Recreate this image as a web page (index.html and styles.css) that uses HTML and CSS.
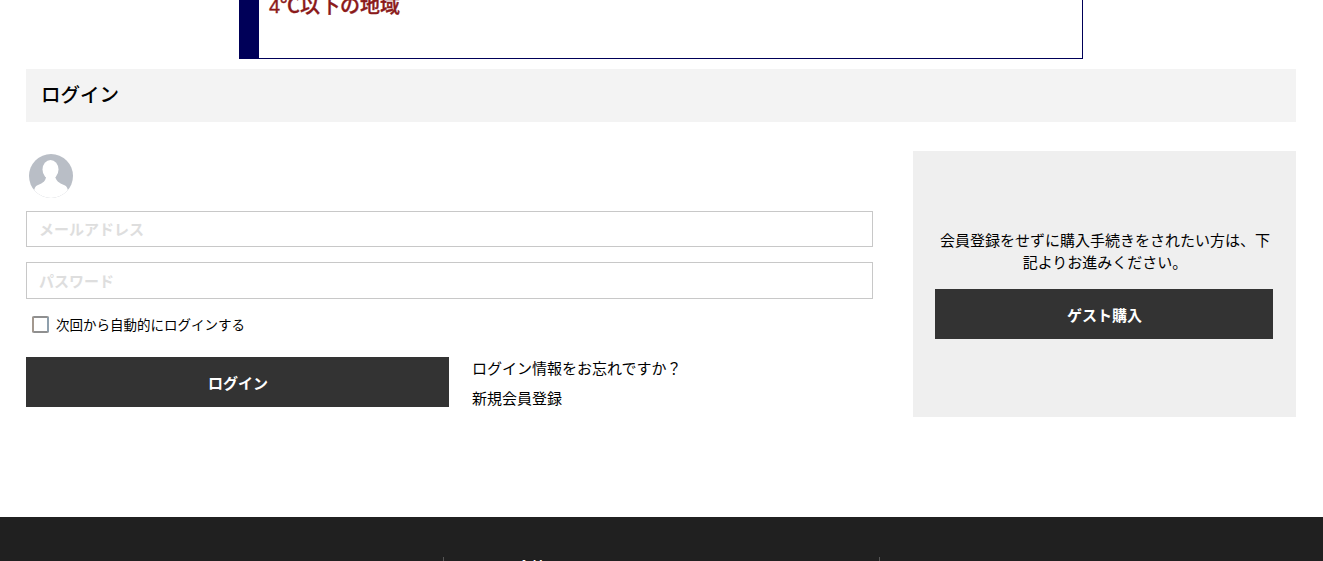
FILE: index.html
```html
<!DOCTYPE html>
<html lang="ja">
<head>
<meta charset="utf-8">
<title>ログイン</title>
<link rel="stylesheet" href="styles.css">
</head>
<body>
<div class="page">
  <div class="notice">
    <div class="notice-body"><p class="notice-title">4℃以下の地域</p></div>
  </div>
  <h1 class="heading">ログイン</h1>
  <main class="main">
    <form class="login">
      <svg class="avatar" viewBox="0 0 44 44" width="44" height="44" aria-hidden="true">
        <defs><clipPath id="c"><circle cx="22" cy="22" r="22"/></clipPath></defs>
        <circle cx="22" cy="22" r="22" fill="#b9bec6"/>
        <g clip-path="url(#c)" fill="#fff">
          <ellipse cx="21.5" cy="15.5" rx="8" ry="9.5"/>
          <path d="M17 22 C17 27 14 29 9 31 C6 32 5 35 5 38 L5 44 L39 44 L39 38 C39 35 38 32 35 31 C30 29 27 27 26 22 Z"/>
        </g>
      </svg>
      <input class="field field-first" type="text" placeholder="メールアドレス">
      <input class="field field-second" type="password" placeholder="パスワード">
      <label class="remember"><span class="check"></span><span class="remember-text">次回から自動的にログインする</span></label>
      <div class="actions">
        <button class="btn btn-login" type="button">ログイン</button>
        <div class="links">
          <a href="#">ログイン情報をお忘れですか？</a>
          <a href="#">新規会員登録</a>
        </div>
      </div>
    </form>
    <aside class="guest">
      <p class="guest-text">会員登録をせずに購入手続きをされたい方は、下記よりお進みください。</p>
      <button class="btn btn-guest" type="button">ゲスト購入</button>
    </aside>
  </main>
  <footer class="footer">
    <div class="foot-col foot-a"></div>
    <div class="foot-col foot-b"><span class="foot-title">会社</span></div>
    <div class="foot-col foot-c"></div>
  </footer>
</div>
</body>
</html>
```
FILE: styles.css
```css
* { box-sizing: border-box; }
html, body { margin: 0; padding: 0; background: #fff; }
body {
  font-family: "Liberation Sans", "Noto Sans CJK JP", sans-serif;
  color: #000;
  overflow: hidden;
}
.page { height: 561px; overflow: hidden; display: flex; flex-direction: column; }

.notice {
  width: 844px;
  height: 59px;
  margin-left: 239px;
  flex: none;
  border: 1px solid #000058;
  border-top: 0;
  border-left: 20px solid #000058;
  overflow: hidden;
}
.notice-body { padding-left: 10px; }
.notice-title {
  margin: -8px 0 0;
  font-size: 20px;
  line-height: 28px;
  font-weight: 500;
  -webkit-text-stroke: 0.35px #8b1a1a;
  color: #8b1a1a;
}

.heading {
  flex: none;
  height: 53px;
  margin: 10px 27px 0 26px;
  padding-left: 15px;
  background: #f3f3f3;
  font-size: 19.5px;
  font-weight: 500;
  line-height: 53px;
}

.main {
  flex: none;
  height: 395px;
  padding: 29px 27px 0 26px;
  display: flex;
  justify-content: space-between;
  align-items: flex-start;
}

.login { width: 847px; display: flex; flex-direction: column; }
.avatar { display: block; margin: 3px 0 13px 3px; }
.field {
  display: block;
  width: 100%;
  height: 36px;
  padding: 1px 12px 0;
  border: 1px solid #c8c8c8;
  border-radius: 0;
  outline: 0;
  font: 700 15px "Liberation Sans", "Noto Sans CJK JP", sans-serif;
  background: #fff;
}
.field-second { height: 37px; margin-top: 15px; }
.field::placeholder { color: #dedede; opacity: 1; }

.remember {
  display: flex;
  align-items: flex-start;
  height: 18px;
  margin: 17px 0 0 6px;
  font-size: 13.5px;
}
.remember-text { line-height: 18px; margin-top: 1px; }
.check {
  width: 17px;
  height: 17px;
  margin-right: 7px;
  border: 2px solid #8f8f8f;
  border-left-color: #a3988e;
  border-right-color: #8fa0ad;
  border-radius: 2px;
  background: #fff;
}

.actions { display: flex; margin-top: 23px; }
.btn {
  display: block;
  height: 50px;
  padding: 0 0 0 1px;
  border: 0;
  border-radius: 0;
  background: #333;
  color: #fff;
  font: 700 15px "Liberation Sans", "Noto Sans CJK JP", sans-serif;
}
.btn-login { width: 423px; }
.links { margin-left: 23px; display: flex; flex-direction: column; gap: 10px; padding-top: 2px; }
.links a { color: #000; text-decoration: none; font-size: 15px; line-height: 20px; }

.guest {
  width: 383px;
  height: 266px;
  background: #efefef;
  padding: 79px 22px 0 23px;
}
.guest-text {
  margin: 0 0 15px;
  font-size: 15px;
  line-height: 22px;
  text-align: center;
}
.btn-guest { width: 338px; margin-left: -1px; }

.footer {
  flex: 1;
  background: #202020;
  display: flex;
  padding-top: 40px;
}
.foot-col { height: 100px; }
.foot-a { width: 443px; }
.foot-b {
  width: 437px;
  border-left: 1px solid #555;
  border-right: 1px solid #555;
  padding-left: 73px;
}
.foot-c { flex: 1; }
.foot-title { display: block; color: #fff; font-size: 14px; font-weight: 700; line-height: 20px; margin-top: 0; }
```
